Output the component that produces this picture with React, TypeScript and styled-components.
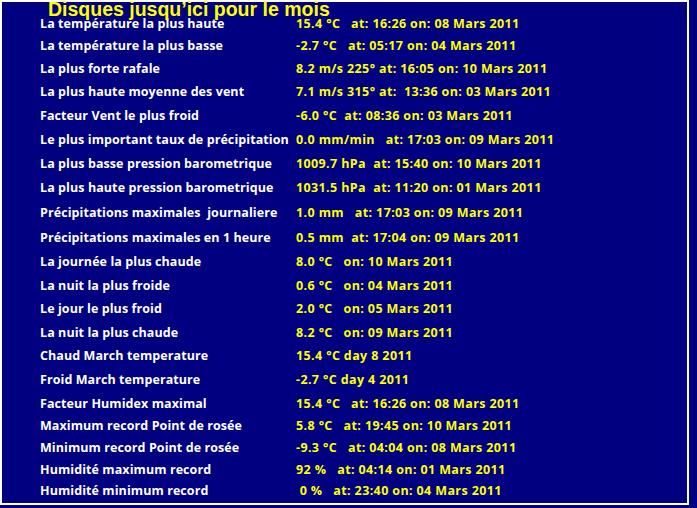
import React from "react";
import styled, { createGlobalStyle } from "styled-components";

const Global = createGlobalStyle`
  html, body { margin: 0; padding: 0; background: #000080; }
  body { width: 697px; height: 508px; overflow: hidden; }
`;

const Frame = styled.div`
  box-sizing: border-box;
  width: 689px;
  height: 505px;
  border: 2px solid #ffffff;
  background: #000080;
  padding-left: 38px;
  display: flex;
  flex-direction: column;
`;

const Title = styled.h1`
  margin: 0 0 -3px 8px;
  line-height: 14px;
  font-family: "Liberation Sans", Arial, sans-serif;
  font-weight: 700;
  font-size: 19.5px;
  color: #ffff00;
  white-space: pre;
  position: relative;
  z-index: 1;
`;

const Row = styled.div<{ $h: number }>`
  display: grid;
  grid-template-columns: 256px 1fr;
  align-items: center;
  height: ${(p) => p.$h}px;
  font-family: "Open Sans", "DejaVu Sans", sans-serif;
  font-weight: 700;
  font-size: 12.5px;
  line-height: 14px;
  white-space: pre;
`;

const Label = styled.span`
  color: #ffffff;
  letter-spacing: 0.08px;
`;

const Value = styled.span`
  color: #ffff00;
  letter-spacing: 0.38px;
`;

const rows: [string, string, number][] = [
  ["La température la plus haute", "15.4 °C   at: 16:26 on: 08 Mars 2011", 22],
  ["La température la plus basse", "-2.7 °C   at: 05:17 on: 04 Mars 2011", 22],
  ["La plus forte rafale", "8.2 m/s 225° at: 16:05 on: 10 Mars 2011", 23],
  ["La plus haute moyenne des vent", "7.1 m/s 315° at:  13:36 on: 03 Mars 2011", 24],
  ["Facteur Vent le plus froid", "-6.0 °C  at: 08:36 on: 03 Mars 2011", 24],
  ["Le plus important taux de précipitation", "0.0 mm/min   at: 17:03 on: 09 Mars 2011", 24],
  ["La plus basse pression barometrique", "1009.7 hPa  at: 15:40 on: 10 Mars 2011", 24],
  ["La plus haute pression barometrique", "1031.5 hPa  at: 11:20 on: 01 Mars 2011", 24],
  ["Précipitations maximales  journaliere", "1.0 mm   at: 17:03 on: 09 Mars 2011", 25],
  ["Précipitations maximales en 1 heure", "0.5 mm  at: 17:04 on: 09 Mars 2011", 25],
  ["La journée la plus chaude", "8.0 °C   on: 10 Mars 2011", 24],
  ["La nuit la plus froide", "0.6 °C   on: 04 Mars 2011", 23],
  ["Le jour le plus froid", "2.0 °C   on: 05 Mars 2011", 24],
  ["La nuit la plus chaude", "8.2 °C   on: 09 Mars 2011", 23],
  ["Chaud March temperature", "15.4 °C day 8 2011", 24],
  ["Froid March temperature", "-2.7 °C day 4 2011", 24],
  ["Facteur Humidex maximal", "15.4 °C   at: 16:26 on: 08 Mars 2011", 23],
  ["Maximum record Point de rosée", "5.8 °C   at: 19:45 on: 10 Mars 2011", 22],
  ["Minimum record Point de rosée", "-9.3 °C   at: 04:04 on: 08 Mars 2011", 22],
  ["Humidité maximum record", "92 %   at: 04:14 on: 01 Mars 2011", 21],
  ["Humidité minimum record", " 0 %   at: 23:40 on: 04 Mars 2011", 22],
];

export default function App() {
  return (
    <>
      <Global />
      <Frame>
        <Title>Disques jusqu’ici pour le mois</Title>
        {rows.map(([label, value, h]) => (
          <Row key={label} $h={h}>
            <Label>{label}</Label>
            <Value>{value}</Value>
          </Row>
        ))}
      </Frame>
    </>
  );
}
